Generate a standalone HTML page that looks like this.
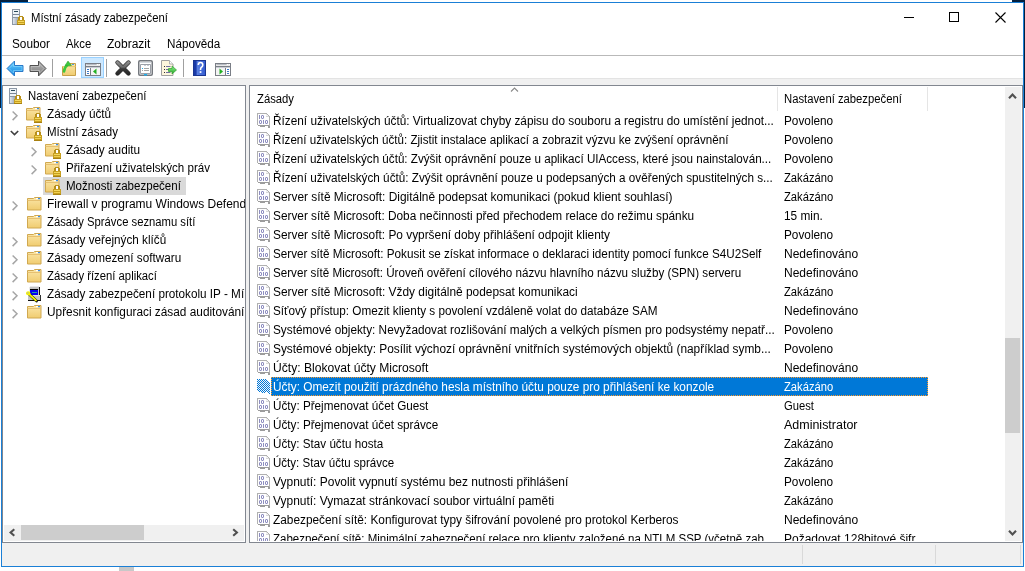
<!DOCTYPE html><html><head><meta charset="utf-8"><style>
*{margin:0;padding:0;box-sizing:border-box}
html,body{width:1025px;height:571px;overflow:hidden;background:#fff}
body{position:relative;will-change:transform;font-family:"Liberation Sans",sans-serif;font-size:12px;color:#000}
.a{position:absolute}
.t{position:absolute;white-space:nowrap;line-height:14px}
svg.i{position:absolute;overflow:visible}
</style></head><body>

<svg width="0" height="0" style="position:absolute">
<defs>
<linearGradient id="gBlue" x1="0" y1="0" x2="0" y2="1"><stop offset="0" stop-color="#6fd2ff"/><stop offset="1" stop-color="#0a80e0"/></linearGradient>
<linearGradient id="gGray" x1="0" y1="0" x2="0" y2="1"><stop offset="0" stop-color="#b8b8b8"/><stop offset="1" stop-color="#7a7a7a"/></linearGradient>
<linearGradient id="gFold" x1="0" y1="0" x2="0" y2="1"><stop offset="0" stop-color="#fbe6a8"/><stop offset="1" stop-color="#f0cc70"/></linearGradient>
<linearGradient id="gLock" x1="0" y1="0" x2="0" y2="1"><stop offset="0" stop-color="#e8c040"/><stop offset="1" stop-color="#b88a10"/></linearGradient>
<linearGradient id="gSrv" x1="0" y1="0" x2="1" y2="0"><stop offset="0" stop-color="#dfe6ee"/><stop offset="1" stop-color="#8e9aa8"/></linearGradient>
<linearGradient id="gHelp" x1="0" y1="0" x2="0" y2="1"><stop offset="0" stop-color="#4a78e0"/><stop offset="1" stop-color="#1c3fa8"/></linearGradient>
<symbol id="srvlock" viewBox="0 0 16 17" overflow="visible" shape-rendering="crispEdges">
  <rect x="1" y="0" width="8" height="16" fill="#8d98a6"/>
  <rect x="2" y="1" width="6" height="14" fill="url(#gSrv)"/>
  <rect x="2" y="1" width="6" height="4" fill="#eef3f7"/>
  <rect x="3" y="2" width="4" height="1" fill="#2a4a5a"/>
  <rect x="2" y="5" width="6" height="1" fill="#7a8696"/>
  <rect x="2" y="6" width="6" height="2" fill="#eef3f7"/>
  <rect x="2" y="8" width="6" height="1" fill="#8a96a4"/>
  <path d="M7 11V8h1V7h4v1h1v3z" fill="#b8901c"/>
  <rect x="9" y="8" width="2" height="3" fill="#fff"/>
  <rect x="6" y="11" width="8" height="5" fill="#c8a020"/>
  <rect x="7" y="12" width="6" height="1" fill="#f4d860"/>
  <rect x="7" y="14" width="6" height="1" fill="#f0d050"/>
  <rect x="6" y="15" width="8" height="1" fill="#a88010"/>
</symbol>
<symbol id="foldlock" viewBox="0 0 17 17" overflow="visible">
  <path d="M0.5 2.5h6l1-1h6.5v12.5h-13.5z" fill="url(#gFold)" stroke="#d0a850"/>
  <rect x="9" y="2" width="3" height="1.2" fill="#fff"/><rect x="11" y="2" width="2" height="1.2" fill="#3a8ee8"/>
  <path d="M0.5 4.5h13.5" stroke="#e6c070" stroke-width="1"/>
  <g shape-rendering="crispEdges">
  <path d="M9 11V8h1V7h4v1h1v3z" fill="#b8901c"/>
  <rect x="11" y="8" width="2" height="3" fill="#fff"/>
  <rect x="8" y="11" width="8" height="6" fill="#c8a020"/>
  <rect x="9" y="12" width="6" height="1" fill="#f4d860"/>
  <rect x="9" y="14" width="6" height="1" fill="#f0d050"/>
  <rect x="8" y="16" width="8" height="1" fill="#a88010"/>
  </g>
</symbol>
<symbol id="fold" viewBox="0 0 16 16" overflow="visible">
  <path d="M0.5 2.5h6l1-1h6.5v12.5h-13.5z" fill="url(#gFold)" stroke="#d0a850"/>
  <rect x="9" y="2" width="3" height="1.2" fill="#fff"/><rect x="11" y="2" width="2" height="1.2" fill="#3a8ee8"/>
  <path d="M0.5 4.5h13.5" stroke="#e6c070" stroke-width="1"/>
</symbol>
<symbol id="ipsec" viewBox="0 0 16 17" overflow="visible">
  <g shape-rendering="crispEdges">
  <path d="M3 2h1v-1h9v10h-10z" fill="#c4c4c4"/>
  <rect x="3" y="2" width="1" height="9" fill="#e8e8e8"/><rect x="4" y="1" width="9" height="1" fill="#e8e8e8"/>
  <rect x="13" y="2" width="1" height="9" fill="#101010"/>
  <rect x="4" y="4" width="8" height="1" fill="#000"/>
  <rect x="4" y="5" width="8" height="5" fill="#0000f0"/>
  <rect x="6" y="7" width="5" height="1" fill="#20a0a0"/>
  <rect x="2" y="10" width="13" height="5" fill="#c4c4c4"/>
  <rect x="2" y="15" width="13" height="1" fill="#101010"/>
  <rect x="14" y="10" width="1" height="5" fill="#303030"/>
  <rect x="2" y="10" width="12" height="1" fill="#e0e0e0"/>
  </g>
  <path d="M2.5 8.5L10.5 16" stroke="#101010" stroke-width="2.8" stroke-linecap="round"/>
  <path d="M2.5 8.5L10 15.5" stroke="#f4f400" stroke-width="1.8" stroke-linecap="round"/>
  <ellipse cx="2.2" cy="8.2" rx="2.2" ry="2" fill="#f4f400"/>
  <rect x="1" y="7.5" width="1.5" height="1" fill="#a0a0e0"/>
</symbol>
<pattern id="chk" width="2" height="2" patternUnits="userSpaceOnUse"><rect width="2" height="2" fill="#0078d7"/><rect x="1" y="0" width="1" height="1" fill="#f4f6fb"/><rect x="0" y="1" width="1" height="1" fill="#f4f6fb"/></pattern>
<symbol id="pol" viewBox="0 0 14 16" overflow="visible" shape-rendering="crispEdges">
  <path d="M0 0h10v1h1v1h1v1h1v12h-1v-1h-1v-1h-3v1h-4v-1h-2v-1h-2z" fill="#b0b0b0"/>
  <path d="M1 1h8v3h3v8h-11z" fill="#fff"/>
  <rect x="9" y="1" width="1" height="1" fill="#e4e4e4"/><rect x="9" y="2" width="2" height="1" fill="#f4f4f4"/><rect x="9" y="3" width="3" height="1" fill="#d8d8d8"/>
  <rect x="1" y="12" width="11" height="1" fill="#9c9c9c"/>
  <rect x="3" y="13" width="5" height="1" fill="#9c9c9c"/>
  <rect x="11" y="13" width="2" height="2" fill="#9c9c9c"/>
  <g fill="#8e8ec0">
   <rect x="2" y="2" width="1" height="4"/>
   <rect x="5" y="2" width="1" height="1"/><rect x="5" y="5" width="1" height="1"/><rect x="4" y="3" width="1" height="2"/><rect x="6" y="3" width="1" height="2"/><g fill="#c4c4de"><rect x="4" y="2" width="1" height="1"/><rect x="6" y="2" width="1" height="1"/><rect x="4" y="5" width="1" height="1"/><rect x="6" y="5" width="1" height="1"/></g>
   <rect x="3" y="7" width="1" height="1"/><rect x="3" y="10" width="1" height="1"/><rect x="2" y="8" width="1" height="2"/><rect x="4" y="8" width="1" height="2"/><g fill="#c4c4de"><rect x="2" y="7" width="1" height="1"/><rect x="4" y="7" width="1" height="1"/><rect x="2" y="10" width="1" height="1"/><rect x="4" y="10" width="1" height="1"/></g>
   <rect x="6" y="7" width="1" height="4"/>
   <rect x="9" y="7" width="1" height="1"/><rect x="9" y="10" width="1" height="1"/><rect x="8" y="8" width="1" height="2"/><rect x="10" y="8" width="1" height="2"/><g fill="#c4c4de"><rect x="8" y="7" width="1" height="1"/><rect x="10" y="7" width="1" height="1"/><rect x="8" y="10" width="1" height="1"/><rect x="10" y="10" width="1" height="1"/></g>
  </g>
</symbol>
<symbol id="polsel" viewBox="0 0 14 16" overflow="visible" shape-rendering="crispEdges">
  <path d="M0 0h10v1h1v1h1v1h1v12h-1v-1h-1v-1h-3v1h-4v-1h-2v-1h-2z" fill="url(#chk)"/>
</symbol>
</defs></svg>

<div class="a" style="left:0;top:0;width:28px;height:2px;background:#04203e"></div>
<div class="a" style="left:0;top:0;width:1px;height:108px;background:#04203e"></div>
<div class="a" style="left:1012px;top:0;width:13px;height:2px;background:#04203e"></div>
<div class="a" style="left:1024px;top:0;width:1px;height:108px;background:#04203e"></div>
<div class="a" style="left:119px;top:567px;width:15px;height:4px;background:#c8c8c8"></div>
<div class="a" style="left:1px;top:2px;width:1023px;height:565px;border:1px solid #1a7fd6;background:#f0f0f0"></div>
<div class="a" style="left:2px;top:3px;width:1021px;height:52px;background:#fff"></div>
<svg class="i" style="left:11px;top:9px" width="16" height="17"><use href="#srvlock"/></svg>
<div class="t" style="left:31px;top:11px;transform:scaleX(0.9413);transform-origin:0 0;">Místní zásady zabezpečení</div>
<div class="a" style="left:904px;top:17px;width:10px;height:1px;background:#000"></div>
<div class="a" style="left:949px;top:12px;width:10px;height:10px;border:1px solid #000"></div>
<svg class="i" style="left:995px;top:12px" width="11" height="11"><path d="M0.5 0.5L10.5 10.5M10.5 0.5L0.5 10.5" stroke="#000" stroke-width="1.1"/></svg>
<div class="t" style="left:12px;top:37px;transform:scaleX(0.9819);transform-origin:0 0;">Soubor</div>
<div class="t" style="left:66px;top:37px;transform:scaleX(0.9443);transform-origin:0 0;">Akce</div>
<div class="t" style="left:107px;top:37px;transform:scaleX(0.9997);transform-origin:0 0;">Zobrazit</div>
<div class="t" style="left:167px;top:37px;transform:scaleX(0.9721);transform-origin:0 0;">Nápověda</div>
<div class="a" style="left:2px;top:55px;width:1021px;height:1px;background:#b9b9b9"></div>
<div class="a" style="left:2px;top:56px;width:1021px;height:22px;background:#fff"></div>
<div class="a" style="left:2px;top:78px;width:1021px;height:1px;background:#e3e3e3"></div>

<svg class="i" style="left:0;top:0" width="240" height="80">
 <defs>
  <linearGradient id="gX" x1="0" y1="60" x2="0" y2="76" gradientUnits="userSpaceOnUse"><stop offset="0" stop-color="#9a9a9a"/><stop offset="0.45" stop-color="#6a6a6a"/><stop offset="0.55" stop-color="#3a3a3a"/><stop offset="1" stop-color="#202020"/></linearGradient>
  <linearGradient id="gHelp2" x1="0" y1="0" x2="1" y2="0"><stop offset="0" stop-color="#1a3aa8"/><stop offset="0.25" stop-color="#1a3aa8"/><stop offset="0.3" stop-color="#5a80e0"/><stop offset="1" stop-color="#3058d0"/></linearGradient>
  <linearGradient id="gGreen" x1="0" y1="0" x2="0" y2="1"><stop offset="0" stop-color="#8af08a"/><stop offset="1" stop-color="#2aa82a"/></linearGradient>
 </defs>
 <path d="M7 68.5L14.5 61V65.5H23V71.5H14.5V76Z" fill="url(#gBlue)" stroke="#2a78c8" stroke-width="1" stroke-linejoin="round"/><path d="M9 68.5L13.5 64V66.5H22V70.5H13.5V73Z" fill="none" stroke="#8fdcff" stroke-width="0.7" opacity="0.8"/>
 <path d="M46 68.5L38.5 61V65.5H30V71.5H38.5V76Z" fill="url(#gGray)" stroke="#505050" stroke-width="1" stroke-linejoin="round"/><path d="M44 68.5L39.5 64V66.5H31V70.5H39.5V73Z" fill="none" stroke="#d0d0d0" stroke-width="0.7" opacity="0.8"/>
 <rect x="52" y="59" width="1" height="18" fill="#a0a0a0"/>
 <path d="M62.5 66.5h7.5v-3h5.5v12h-13z" fill="url(#gFold)" stroke="#c8a048"/>
 <path d="M62.5 66.5h13" stroke="#e8c878"/>
 <rect x="72" y="64" width="2" height="1" fill="#4a9ae8"/>
 <path d="M64 71.5Q64.5 67 67.5 65" fill="none" stroke="#3cc83c" stroke-width="2.6" stroke-linecap="round"/>
 <path d="M65 65.5L68 61L71.5 65.5L69 65.8Z" fill="#3cc83c" stroke="#2a9a2a" stroke-width="0.5"/>
 <rect x="81.5" y="57.5" width="22" height="20" fill="#cce8ff" stroke="#99d1ff"/>
 <g id="win1">
 <rect x="85.5" y="63.5" width="15" height="12" fill="#fff" stroke="#7a7e86"/>
 <rect x="86" y="64" width="14" height="2" fill="#e8e8e8"/>
 <path d="M86.5 64.5h10" stroke="#b8bcc4"/><rect x="97" y="64" width="1" height="1" fill="#fff"/><rect x="99" y="64" width="1" height="1" fill="#fff"/>
 <rect x="86" y="66" width="14" height="1" fill="#7a7e86"/>
 <rect x="86" y="67" width="14" height="1" fill="#c8ccd4"/>
 </g>
 <rect x="90" y="68" width="1" height="7" fill="#7a7e86"/>
 <path d="M87 69.5h2M87 71.5h2M87 73.5h2" stroke="#3a78c8" stroke-width="1"/>
 <rect x="91" y="68" width="9" height="7" fill="#f4f4f4"/>
 <path d="M96.5 68.5L93 71.5L96.5 74.5Z" fill="#22b022"/>
 <rect x="106" y="59" width="1" height="18" fill="#a0a0a0"/>
 <path d="M117.5 62.5L128.5 73.5M128.5 62.5L117.5 73.5" stroke="#303030" stroke-width="4.4" stroke-linecap="round"/>
 <path d="M117.5 62.5L128.5 73.5M128.5 62.5L117.5 73.5" stroke="url(#gX)" stroke-width="3" stroke-linecap="round"/>
 <rect x="138.75" y="60.75" width="13.5" height="14.5" rx="1.2" fill="#fff" stroke="#74787e" stroke-width="1.5"/>
 <rect x="140" y="62" width="11" height="1" fill="#d4d8de"/>
 <path d="M140.5 64.5h10v9h-10z" fill="#fff" stroke="#9ca0a8"/>
 <rect x="144" y="65" width="2" height="1" fill="#c8ccd4"/><rect x="147" y="65" width="2" height="1" fill="#c8ccd4"/>
 <rect x="142" y="68" width="1" height="1" fill="#20b0f0"/><rect x="142" y="70" width="1" height="1" fill="#a0a0a0"/>
 <path d="M144 68.5h5M144 70.5h5" stroke="#a4a4a4"/>
 <rect x="144" y="74" width="3" height="1.5" fill="#20b0f0"/>
 <path d="M161.5 60.5h8l3.5 3.5v11.5h-11.5z" fill="#fdf6dc" stroke="#a0a0a0"/>
 <path d="M169.5 60.5v3.5h3.5" fill="#fff" stroke="#b0b0b0"/>
 <rect x="164" y="66" width="1" height="1" fill="#303030"/><rect x="164" y="69" width="1" height="1" fill="#303030"/><rect x="164" y="72" width="1" height="1" fill="#303030"/>
 <path d="M166 66.5h4.5M166 69.5h4.5M166 72.5h4.5" stroke="#7070a0"/>
 <path d="M168.5 68.5h3.5v-2.5l4.5 4-4.5 4v-2.5h-3.5z" fill="url(#gGreen)" stroke="#30a030" stroke-width="0.7"/>
 <rect x="183" y="59" width="1" height="18" fill="#a0a0a0"/>
 <rect x="193" y="60" width="13" height="16" fill="url(#gHelp2)"/>
 <rect x="193.5" y="60.5" width="12" height="15" fill="none" stroke="#1a3590"/>
 <path d="M198.3 65Q198.3 62.5 200.5 62.5Q202.8 62.5 202.8 65Q202.8 66.5 201.2 67.5Q200.5 68 200.5 70" fill="none" stroke="#fff" stroke-width="1.6"/>
 <rect x="199.7" y="71.2" width="1.7" height="1.7" fill="#fff"/>
 <rect x="215.5" y="63.5" width="15" height="12" fill="#fff" stroke="#7a7e86"/>
 <rect x="216" y="64" width="14" height="2" fill="#e8e8e8"/>
 <path d="M216.5 64.5h10" stroke="#b8bcc4"/><rect x="227" y="64" width="1" height="1" fill="#fff"/><rect x="229" y="64" width="1" height="1" fill="#fff"/>
 <rect x="216" y="66" width="14" height="1" fill="#7a7e86"/>
 <rect x="216" y="67" width="14" height="1" fill="#c8ccd4"/>
 <rect x="216" y="68" width="9" height="7" fill="#f4f4f4"/>
 <rect x="225" y="68" width="1" height="7" fill="#7a7e86"/>
 <path d="M227 69.5h2M227 71.5h2M227 73.5h2" stroke="#3a78c8" stroke-width="1"/>
 <path d="M219.5 68.5L223 71.5L219.5 74.5Z" fill="#22b022"/>
</svg>

<div class="a" style="left:2px;top:85px;width:244px;height:458px;border:1px solid #828790;background:#fff"></div>
<div class="a" style="left:3px;top:86px;width:242px;height:439px;overflow:hidden">
<svg class="i" style="left:5px;top:2px" width="16" height="17"><use href="#srvlock"/></svg>
<div class="t" style="left:25px;top:3px;transform:scaleX(0.9438);transform-origin:0 0;">Nastavení zabezpečení</div>
<svg class="i" style="left:9px;top:25px" width="7" height="10"><path d="M0.6 0.5L5 4.8L0.6 9.1" fill="none" stroke="#a6a6a6" stroke-width="1.5"/></svg>
<svg class="i" style="left:23px;top:20px" width="17" height="17"><use href="#foldlock"/></svg>
<div class="t" style="left:44px;top:21px;transform:scaleX(0.9816);transform-origin:0 0;">Zásady účtů</div>
<svg class="i" style="left:7px;top:44px" width="10" height="7"><path d="M0.8 1L4.5 4.6L8.2 1" fill="none" stroke="#404040" stroke-width="1.6"/></svg>
<svg class="i" style="left:23px;top:38px" width="17" height="17"><use href="#foldlock"/></svg>
<div class="t" style="left:44px;top:39px;transform:scaleX(0.9591);transform-origin:0 0;">Místní zásady</div>
<svg class="i" style="left:28px;top:61px" width="7" height="10"><path d="M0.6 0.5L5 4.8L0.6 9.1" fill="none" stroke="#a6a6a6" stroke-width="1.5"/></svg>
<svg class="i" style="left:42px;top:56px" width="17" height="17"><use href="#foldlock"/></svg>
<div class="t" style="left:63px;top:57px;transform:scaleX(0.9838);transform-origin:0 0;">Zásady auditu</div>
<svg class="i" style="left:28px;top:79px" width="7" height="10"><path d="M0.6 0.5L5 4.8L0.6 9.1" fill="none" stroke="#a6a6a6" stroke-width="1.5"/></svg>
<svg class="i" style="left:42px;top:74px" width="17" height="17"><use href="#foldlock"/></svg>
<div class="t" style="left:63px;top:75px;transform:scaleX(0.9639);transform-origin:0 0;">Přiřazení uživatelských práv</div>
<div class="a" style="left:40px;top:91px;width:143px;height:18px;background:#d9d9d9"></div>
<svg class="i" style="left:42px;top:92px" width="17" height="17"><use href="#foldlock"/></svg>
<div class="t" style="left:63px;top:93px;transform:scaleX(0.9620);transform-origin:0 0;">Možnosti zabezpečení</div>
<svg class="i" style="left:9px;top:115px" width="7" height="10"><path d="M0.6 0.5L5 4.8L0.6 9.1" fill="none" stroke="#a6a6a6" stroke-width="1.5"/></svg>
<svg class="i" style="left:24px;top:110px" width="16" height="16"><use href="#fold"/></svg>
<div class="t" style="left:44px;top:111px;transform:scaleX(0.9988);transform-origin:0 0;">Firewall v programu Windows Defend</div>
<svg class="i" style="left:24px;top:128px" width="16" height="16"><use href="#fold"/></svg>
<div class="t" style="left:44px;top:129px;transform:scaleX(0.9387);transform-origin:0 0;">Zásady Správce seznamu sítí</div>
<svg class="i" style="left:9px;top:151px" width="7" height="10"><path d="M0.6 0.5L5 4.8L0.6 9.1" fill="none" stroke="#a6a6a6" stroke-width="1.5"/></svg>
<svg class="i" style="left:24px;top:146px" width="16" height="16"><use href="#fold"/></svg>
<div class="t" style="left:44px;top:147px;transform:scaleX(0.9763);transform-origin:0 0;">Zásady veřejných klíčů</div>
<svg class="i" style="left:9px;top:169px" width="7" height="10"><path d="M0.6 0.5L5 4.8L0.6 9.1" fill="none" stroke="#a6a6a6" stroke-width="1.5"/></svg>
<svg class="i" style="left:24px;top:164px" width="16" height="16"><use href="#fold"/></svg>
<div class="t" style="left:44px;top:165px;transform:scaleX(0.9764);transform-origin:0 0;">Zásady omezení softwaru</div>
<svg class="i" style="left:9px;top:187px" width="7" height="10"><path d="M0.6 0.5L5 4.8L0.6 9.1" fill="none" stroke="#a6a6a6" stroke-width="1.5"/></svg>
<svg class="i" style="left:24px;top:182px" width="16" height="16"><use href="#fold"/></svg>
<div class="t" style="left:44px;top:183px;transform:scaleX(0.9413);transform-origin:0 0;">Zásady řízení aplikací</div>
<svg class="i" style="left:9px;top:205px" width="7" height="10"><path d="M0.6 0.5L5 4.8L0.6 9.1" fill="none" stroke="#a6a6a6" stroke-width="1.5"/></svg>
<svg class="i" style="left:23px;top:199px" width="16" height="17"><use href="#ipsec"/></svg>
<div class="t" style="left:44px;top:201px;transform:scaleX(0.9765);transform-origin:0 0;">Zásady zabezpečení protokolu IP - Mí</div>
<svg class="i" style="left:9px;top:223px" width="7" height="10"><path d="M0.6 0.5L5 4.8L0.6 9.1" fill="none" stroke="#a6a6a6" stroke-width="1.5"/></svg>
<svg class="i" style="left:24px;top:218px" width="16" height="16"><use href="#fold"/></svg>
<div class="t" style="left:44px;top:219px;transform:scaleX(0.9861);transform-origin:0 0;">Upřesnit konfiguraci zásad auditování</div>
</div>
<div class="a" style="left:4px;top:525px;width:240px;height:16px;background:#f0f0f0"></div>
<div class="a" style="left:21px;top:525px;width:123px;height:15px;background:#cdcdcd"></div>
<svg class="i" style="left:0;top:0" width="250" height="560"><path d="M14.3 529.3L10.6 532.5L14.3 535.7" fill="none" stroke="#505050" stroke-width="2.1"/><path d="M233.2 529.3L236.9 532.5L233.2 535.7" fill="none" stroke="#505050" stroke-width="2.1"/></svg>
<div class="a" style="left:249px;top:85px;width:774px;height:458px;border:1px solid #828790;background:#fff"></div>
<div class="a" style="left:250px;top:86px;width:755px;height:455px;overflow:hidden">
<div class="t" style="left:7px;top:6px;transform:scaleX(0.9402);transform-origin:0 0;">Zásady</div>
<div class="t" style="left:534px;top:6px;transform:scaleX(0.9399);transform-origin:0 0;">Nastavení zabezpečení</div>
<div class="a" style="left:527px;top:1px;width:1px;height:24px;background:#e5e5e5"></div>
<div class="a" style="left:677px;top:1px;width:1px;height:24px;background:#e5e5e5"></div>
<svg class="i" style="left:260px;top:0px" width="10" height="7"><path d="M1 5.5L4.5 2L8 5.5" fill="none" stroke="#8a8a8a" stroke-width="1.1"/></svg>
<svg class="i" style="left:7px;top:27px" width="14" height="16"><use href="#pol"/></svg>
<div class="t" style="left:23px;top:28px;color:#000;transform:scaleX(0.9845);transform-origin:0 0;">Řízení uživatelských účtů: Virtualizovat chyby zápisu do souboru a registru do umístění jednot...</div>
<div class="t" style="left:534px;top:28px;color:#000;width:141px;overflow:hidden;transform:scaleX(0.9828);transform-origin:0 0;">Povoleno</div>
<svg class="i" style="left:7px;top:46px" width="14" height="16"><use href="#pol"/></svg>
<div class="t" style="left:23px;top:47px;color:#000;transform:scaleX(0.9671);transform-origin:0 0;">Řízení uživatelských účtů: Zjistit instalace aplikací a zobrazit výzvu ke zvýšení oprávnění</div>
<div class="t" style="left:534px;top:47px;color:#000;width:141px;overflow:hidden;transform:scaleX(0.9828);transform-origin:0 0;">Povoleno</div>
<svg class="i" style="left:7px;top:65px" width="14" height="16"><use href="#pol"/></svg>
<div class="t" style="left:23px;top:66px;color:#000;transform:scaleX(0.9703);transform-origin:0 0;">Řízení uživatelských účtů: Zvýšit oprávnění pouze u aplikací UIAccess, které jsou nainstalován...</div>
<div class="t" style="left:534px;top:66px;color:#000;width:141px;overflow:hidden;transform:scaleX(0.9828);transform-origin:0 0;">Povoleno</div>
<svg class="i" style="left:7px;top:84px" width="14" height="16"><use href="#pol"/></svg>
<div class="t" style="left:23px;top:85px;color:#000;transform:scaleX(0.9770);transform-origin:0 0;">Řízení uživatelských účtů: Zvýšit oprávnění pouze u podepsaných a ověřených spustitelných s...</div>
<div class="t" style="left:534px;top:85px;color:#000;width:141px;overflow:hidden;transform:scaleX(0.9335);transform-origin:0 0;">Zakázáno</div>
<svg class="i" style="left:7px;top:103px" width="14" height="16"><use href="#pol"/></svg>
<div class="t" style="left:23px;top:104px;color:#000;transform:scaleX(0.9917);transform-origin:0 0;">Server sítě Microsoft: Digitálně podepsat komunikaci (pokud klient souhlasí)</div>
<div class="t" style="left:534px;top:104px;color:#000;width:141px;overflow:hidden;transform:scaleX(0.9335);transform-origin:0 0;">Zakázáno</div>
<svg class="i" style="left:7px;top:122px" width="14" height="16"><use href="#pol"/></svg>
<div class="t" style="left:23px;top:123px;color:#000;transform:scaleX(0.9851);transform-origin:0 0;">Server sítě Microsoft: Doba nečinnosti před přechodem relace do režimu spánku</div>
<div class="t" style="left:534px;top:123px;color:#000;width:141px;overflow:hidden;transform:scaleX(0.9867);transform-origin:0 0;">15 min.</div>
<svg class="i" style="left:7px;top:141px" width="14" height="16"><use href="#pol"/></svg>
<div class="t" style="left:23px;top:142px;color:#000;transform:scaleX(0.9888);transform-origin:0 0;">Server sítě Microsoft: Po vypršení doby přihlášení odpojit klienty</div>
<div class="t" style="left:534px;top:142px;color:#000;width:141px;overflow:hidden;transform:scaleX(0.9828);transform-origin:0 0;">Povoleno</div>
<svg class="i" style="left:7px;top:160px" width="14" height="16"><use href="#pol"/></svg>
<div class="t" style="left:23px;top:161px;color:#000;transform:scaleX(0.9750);transform-origin:0 0;">Server sítě Microsoft: Pokusit se získat informace o deklaraci identity pomocí funkce S4U2Self</div>
<div class="t" style="left:534px;top:161px;color:#000;width:141px;overflow:hidden;transform:scaleX(1.0016);transform-origin:0 0;">Nedefinováno</div>
<svg class="i" style="left:7px;top:179px" width="14" height="16"><use href="#pol"/></svg>
<div class="t" style="left:23px;top:180px;color:#000;transform:scaleX(0.9695);transform-origin:0 0;">Server sítě Microsoft: Úroveň ověření cílového názvu hlavního názvu služby (SPN) serveru</div>
<div class="t" style="left:534px;top:180px;color:#000;width:141px;overflow:hidden;transform:scaleX(1.0016);transform-origin:0 0;">Nedefinováno</div>
<svg class="i" style="left:7px;top:198px" width="14" height="16"><use href="#pol"/></svg>
<div class="t" style="left:23px;top:199px;color:#000;transform:scaleX(0.9908);transform-origin:0 0;">Server sítě Microsoft: Vždy digitálně podepsat komunikaci</div>
<div class="t" style="left:534px;top:199px;color:#000;width:141px;overflow:hidden;transform:scaleX(0.9335);transform-origin:0 0;">Zakázáno</div>
<svg class="i" style="left:7px;top:217px" width="14" height="16"><use href="#pol"/></svg>
<div class="t" style="left:23px;top:218px;color:#000;transform:scaleX(0.9774);transform-origin:0 0;">Síťový přístup: Omezit klienty s povolení vzdáleně volat do databáze SAM</div>
<div class="t" style="left:534px;top:218px;color:#000;width:141px;overflow:hidden;transform:scaleX(1.0016);transform-origin:0 0;">Nedefinováno</div>
<svg class="i" style="left:7px;top:236px" width="14" height="16"><use href="#pol"/></svg>
<div class="t" style="left:23px;top:237px;color:#000;transform:scaleX(0.9835);transform-origin:0 0;">Systémové objekty: Nevyžadovat rozlišování malých a velkých písmen pro podsystémy nepatř...</div>
<div class="t" style="left:534px;top:237px;color:#000;width:141px;overflow:hidden;transform:scaleX(0.9828);transform-origin:0 0;">Povoleno</div>
<svg class="i" style="left:7px;top:255px" width="14" height="16"><use href="#pol"/></svg>
<div class="t" style="left:23px;top:256px;color:#000;transform:scaleX(0.9900);transform-origin:0 0;">Systémové objekty: Posílit výchozí oprávnění vnitřních systémových objektů (například symb...</div>
<div class="t" style="left:534px;top:256px;color:#000;width:141px;overflow:hidden;transform:scaleX(0.9828);transform-origin:0 0;">Povoleno</div>
<svg class="i" style="left:7px;top:274px" width="14" height="16"><use href="#pol"/></svg>
<div class="t" style="left:23px;top:275px;color:#000;transform:scaleX(1.0083);transform-origin:0 0;">Účty: Blokovat účty Microsoft</div>
<div class="t" style="left:534px;top:275px;color:#000;width:141px;overflow:hidden;transform:scaleX(1.0016);transform-origin:0 0;">Nedefinováno</div>
<div class="a" style="left:21px;top:291px;width:657px;height:19px;background:#0078d7;outline:1px dotted #ff9a2a;outline-offset:-1px"></div>
<svg class="i" style="left:7px;top:293px" width="14" height="16"><use href="#polsel"/></svg>
<div class="t" style="left:23px;top:294px;color:#fff;transform:scaleX(0.9857);transform-origin:0 0;">Účty: Omezit použití prázdného hesla místního účtu pouze pro přihlášení ke konzole</div>
<div class="t" style="left:534px;top:294px;color:#fff;width:141px;overflow:hidden;transform:scaleX(0.9335);transform-origin:0 0;">Zakázáno</div>
<svg class="i" style="left:7px;top:312px" width="14" height="16"><use href="#pol"/></svg>
<div class="t" style="left:23px;top:313px;color:#000;transform:scaleX(0.9746);transform-origin:0 0;">Účty: Přejmenovat účet Guest</div>
<div class="t" style="left:534px;top:313px;color:#000;width:141px;overflow:hidden;transform:scaleX(0.9332);transform-origin:0 0;">Guest</div>
<svg class="i" style="left:7px;top:331px" width="14" height="16"><use href="#pol"/></svg>
<div class="t" style="left:23px;top:332px;color:#000;transform:scaleX(0.9751);transform-origin:0 0;">Účty: Přejmenovat účet správce</div>
<div class="t" style="left:534px;top:332px;color:#000;width:141px;overflow:hidden;transform:scaleX(1.0397);transform-origin:0 0;">Administrator</div>
<svg class="i" style="left:7px;top:350px" width="14" height="16"><use href="#pol"/></svg>
<div class="t" style="left:23px;top:351px;color:#000;transform:scaleX(0.9718);transform-origin:0 0;">Účty: Stav účtu hosta</div>
<div class="t" style="left:534px;top:351px;color:#000;width:141px;overflow:hidden;transform:scaleX(0.9335);transform-origin:0 0;">Zakázáno</div>
<svg class="i" style="left:7px;top:369px" width="14" height="16"><use href="#pol"/></svg>
<div class="t" style="left:23px;top:370px;color:#000;transform:scaleX(0.9614);transform-origin:0 0;">Účty: Stav účtu správce</div>
<div class="t" style="left:534px;top:370px;color:#000;width:141px;overflow:hidden;transform:scaleX(0.9335);transform-origin:0 0;">Zakázáno</div>
<svg class="i" style="left:7px;top:388px" width="14" height="16"><use href="#pol"/></svg>
<div class="t" style="left:23px;top:389px;color:#000;transform:scaleX(0.9965);transform-origin:0 0;">Vypnutí: Povolit vypnutí systému bez nutnosti přihlášení</div>
<div class="t" style="left:534px;top:389px;color:#000;width:141px;overflow:hidden;transform:scaleX(0.9828);transform-origin:0 0;">Povoleno</div>
<svg class="i" style="left:7px;top:407px" width="14" height="16"><use href="#pol"/></svg>
<div class="t" style="left:23px;top:408px;color:#000;transform:scaleX(0.9950);transform-origin:0 0;">Vypnutí: Vymazat stránkovací soubor virtuální paměti</div>
<div class="t" style="left:534px;top:408px;color:#000;width:141px;overflow:hidden;transform:scaleX(0.9335);transform-origin:0 0;">Zakázáno</div>
<svg class="i" style="left:7px;top:426px" width="14" height="16"><use href="#pol"/></svg>
<div class="t" style="left:23px;top:427px;color:#000;transform:scaleX(0.9869);transform-origin:0 0;">Zabezpečení sítě: Konfigurovat typy šifrování povolené pro protokol Kerberos</div>
<div class="t" style="left:534px;top:427px;color:#000;width:141px;overflow:hidden;transform:scaleX(1.0016);transform-origin:0 0;">Nedefinováno</div>
<svg class="i" style="left:7px;top:445px" width="14" height="16"><use href="#pol"/></svg>
<div class="t" style="left:23px;top:446px;color:#000;transform:scaleX(0.9589);transform-origin:0 0;">Zabezpečení sítě: Minimální zabezpečení relace pro klienty založené na NTLM SSP (včetně zab...</div>
<div class="t" style="left:534px;top:446px;color:#000;width:141px;overflow:hidden;">Požadovat 128bitové šifr...</div>
</div>
<div class="a" style="left:1005px;top:87px;width:16px;height:454px;background:#f0f0f0"></div>
<div class="a" style="left:1005px;top:338px;width:15px;height:95px;background:#cdcdcd"></div>
<svg class="i" style="left:0;top:0" width="1025" height="571"><path d="M1009 98.3L1012.5 94.6L1016 98.3" fill="none" stroke="#505050" stroke-width="2.1"/><path d="M1009 530.7L1012.5 534.4L1016 530.7" fill="none" stroke="#505050" stroke-width="2.1"/></svg>
<div class="a" style="left:802px;top:545px;width:1px;height:19px;background:#d9d9d9"></div>
<div class="a" style="left:935px;top:545px;width:1px;height:19px;background:#d9d9d9"></div>
<div class="a" style="left:1020px;top:545px;width:1px;height:19px;background:#d9d9d9"></div>
</body></html>
